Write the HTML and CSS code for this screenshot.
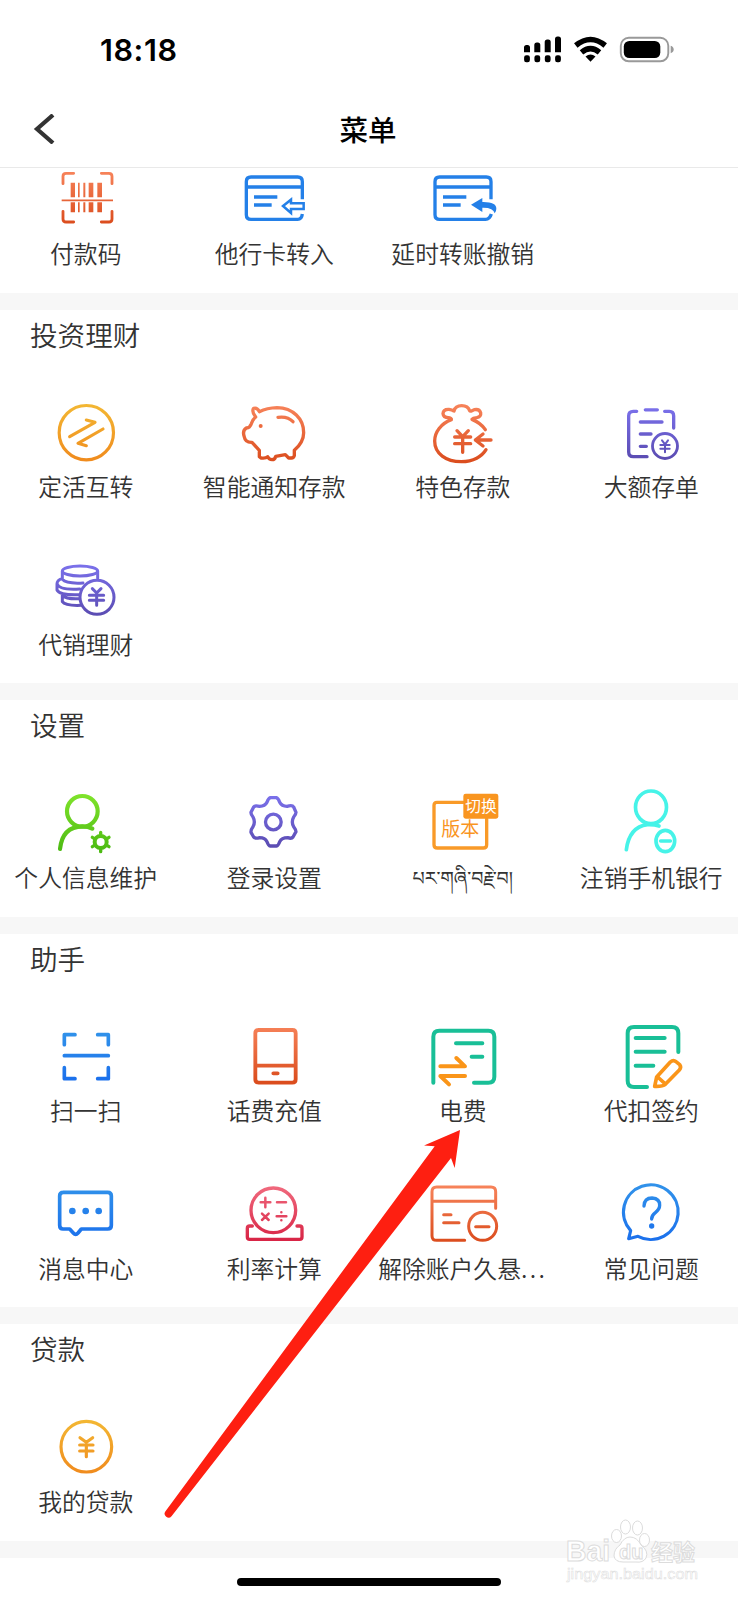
FILE: index.html
```html
<!DOCTYPE html>
<html lang="zh-CN">
<head>
<meta charset="utf-8">
<title>菜单</title>
<link rel="stylesheet" href="styles.css">
</head>
<body>
<svg class="defs" width="0" height="0" aria-hidden="true">
  <defs>
    <linearGradient id="orange"><stop offset="0" stop-color="#f7835a"/><stop offset="1" stop-color="#db4d1e"/></linearGradient>
    <linearGradient id="blue"><stop offset="0" stop-color="#3091ea"/><stop offset="1" stop-color="#1b70ec"/></linearGradient>
    <linearGradient id="purple"><stop offset="0" stop-color="#7a70ea"/><stop offset="1" stop-color="#5b4cb2"/></linearGradient>
    <linearGradient id="amber"><stop offset="0" stop-color="#f3b733"/><stop offset="1" stop-color="#f08b1d"/></linearGradient>
    <linearGradient id="oA" href="#orange" gradientUnits="userSpaceOnUse" x1="0" x2="0" y1="35" y2="190"/>
    <linearGradient id="oB" href="#orange" gradientUnits="userSpaceOnUse" x1="0" x2="0" y1="42" y2="215"/>
    <linearGradient id="oE" href="#orange" gradientUnits="userSpaceOnUse" x1="0" x2="0" y1="530" y2="695"/>
    <linearGradient id="bD" href="#blue" gradientUnits="userSpaceOnUse" x1="0" x2="0" y1="70" y2="210"/>
    <linearGradient id="bE" href="#blue" gradientUnits="userSpaceOnUse" x1="0" x2="0" y1="530" y2="695"/>
    <linearGradient id="pB" href="#purple" gradientUnits="userSpaceOnUse" x1="0" x2="0" y1="55" y2="205"/>
    <linearGradient id="pC" href="#purple" gradientUnits="userSpaceOnUse" x1="0" x2="0" y1="528" y2="678"/>
    <linearGradient id="pS" href="#purple" gradientUnits="userSpaceOnUse" x1="0" x2="0" y1="350" y2="502"/>
    <linearGradient id="aB" href="#amber" gradientUnits="userSpaceOnUse" x1="0" x2="0" y1="42" y2="212"/>
    <linearGradient id="aL" href="#amber" gradientUnits="userSpaceOnUse" x1="0" x2="0" y1="362" y2="522"/>
    <linearGradient id="gS" gradientUnits="userSpaceOnUse" x1="0" x2="0" y1="345" y2="515"><stop offset="0" stop-color="#7fe32b"/><stop offset="1" stop-color="#4cba12"/></linearGradient>
    <linearGradient id="rE" gradientUnits="userSpaceOnUse" x1="0" x2="0" y1="532" y2="692"><stop offset="0" stop-color="#f0697d"/><stop offset="1" stop-color="#d82546"/></linearGradient>
  </defs>
</svg>

<header class="top">
  <div class="status">
    <span class="clock">18:18</span>
    <svg class="indicators" width="152" height="28" viewBox="523 36 152 28">
      <path d="M524 47.500q0-2.500 2.500-2.500h1q2.500 0 2.500 2.500v4.700h-6zM534.300 45q0-2.500 2.500-2.500h1q2.500 0 2.500 2.500v7.200h-6zM544.700 42q0-2.500 2.500-2.500h1q2.500 0 2.500 2.500v10.200h-6zM555 39q0-2.500 2.500-2.500h1q2.500 0 2.500 2.500v13.200h-6z" fill="#000"/>
      <path d="M526.300 57.500h1.400v2.600h-1.400zM536.600 57.500h1.400v2.600h-1.400zM547 57.500h1.400v2.600h-1.400zM557.300 57.500h1.400v2.600h-1.400z" fill="#000" stroke="#000" stroke-width="4.400" stroke-linejoin="round"/>
      <path d="M575.800 45.500Q590.500 33.500 605.200 45.500M581.500 52.300Q590.500 45 599.500 52.300" fill="none" stroke="#000" stroke-width="5.500"/>
      <path d="M585.500 56.500Q590.500 52.300 595.500 56.500L590.500 61.800Z" fill="#000"/>
      <rect x="620.800" y="37.800" width="47.500" height="23.500" rx="8" fill="none" stroke="#999" stroke-width="1.900"/>
      <rect x="623.800" y="41" width="36.500" height="17" rx="5.500" fill="#000"/>
      <path d="M670.700 45.800q3 1 3 3.700t-3 3.700z" fill="#999"/>
    </svg>
  </div>
  <nav class="nav">
    <svg class="back" width="22" height="30" viewBox="0 0 22 30"><path d="M20 1L4 15L20 29" fill="none" stroke="#333" stroke-width="4.200"/></svg>
    <h1 class="title">菜单</h1>
  </nav>
</header>

<main>
  <section class="section section-scrolled">
    <div class="grid">
      <a class="item">
        <svg class="icon" viewBox="137 -5 240 240" stroke="url(#oA)" stroke-width="8.500"><path d="M188 72V50q0-9 9-9h23M303 41h23q9 0 9 9v22M188 155v23q0 9 9 9h23M303 187h23q9 0 9-9v-23"/><path d="M211 69h13v44h-13zM233 69h5v44h-5zM249 69h6v44h-6zM265 69h14v44h-14zM291 69h14v44h-14zM211 128h13v30h-13zM233 128h5v30h-5zM249 128h6v30h-6zM265 128h14v30h-14zM291 128h14v30h-14zM184 119.500h154v5H184z" fill="url(#oA)" stroke="none"/></svg>
        <span class="label">付款码</span>
      </a>
      <a class="item">
        <svg class="icon butt" viewBox="703 -5 240 240" stroke="#2480e8" stroke-width="10"><path d="M908 119V66q0-14-14-14H754q-14 0-14 14v99q0 14 14 14h140q12 0 14-16M740 82h168M763 112h70M763 136h53"/><path d="M850 139l24-19v11h38v17h-38v12z" stroke-width="7.500"/></svg>
        <span class="label">他行卡转入</span>
      </a>
      <a class="item">
        <svg class="icon butt" viewBox="161 -5 240 240" stroke="#2480e8" stroke-width="10"><path d="M365 119V66q0-14-14-14H211q-14 0-14 14v99q0 14 14 14h138q12 0 17-16M197 82h168M221 112h70M221 136h53"/><path d="M305 135l34-20v12q42-1 42 20 0 8-5 14-4-18-37-17v13z" fill="#2480e8" stroke="none"/></svg>
        <span class="label">延时转账撤销</span>
      </a>
    </div>
  </section>

  <section class="section">
    <h2 class="heading">投资理财</h2>
    <div class="grid">
      <a class="item">
        <svg class="icon" viewBox="137 5 240 240" stroke="url(#aB)" stroke-width="9.500"><circle cx="258" cy="127" r="81.500"/><path d="M208 139L284 96L258 89M308 116L233 159L258 166"/></svg>
        <span class="label">定活互转</span>
      </a>
      <a class="item">
        <svg class="icon" viewBox="703 5 240 240" stroke="url(#oB)" stroke-width="10"><path d="M779 64Q802 53 832 52C880 53 912 85 912 127C912 150 902 164 884 180V196Q882 204 873 203H867L857 193L828 198Q826 208 817 208Q808 208 804 199Q798 205 784 203L779 199V180L757 156Q737 157 734 140Q727 121 740 113Q751 112 755 100Q758 88 768 80Q755 63 762 54Q773 51 779 64Z"/><path d="M835 81Q864 77 880 94"/><circle cx="783" cy="107" r="6" fill="#ed6b3e" stroke="none"/></svg>
        <span class="label">智能通知存款</span>
      </a>
      <a class="item">
        <svg class="icon" viewBox="161 5 240 240" stroke="url(#oB)" stroke-width="10"><path d="M348 118Q335 98 308 87Q311 83 322 82Q336 80 334 67Q330 55 315 58Q303 65 301 61Q296 46 277 46Q258 46 254 62Q248 58 239 57Q222 56 221 70Q222 82 238 82Q248 84 246 88C215 100 196 125 196 152C196 190 230 214 276 214C312 214 338 198 350 178M263 121l17 18 17-18M280 140v46M256 140h48M256 160h48M318 149h47M341 131L318 149L341 167"/></svg>
        <span class="label">特色存款</span>
      </a>
      <a class="item">
        <svg class="icon" viewBox="727 5 240 240" stroke="url(#pB)" stroke-width="10"><path d="M804 63h-10q-14 0-14 14v108q0 14 14 14h41M830 58.500h36M888 63h14q13 0 13 14v36M815 95h65M815 131h32M815 168h18"/><circle cx="889" cy="167" r="37.500" stroke-width="8.500"/><path d="M880 150l9 12 9-12M889 162v24M875 164h28M875 175h28" stroke-width="6"/></svg>
        <span class="label">大额存单</span>
      </a>
      <a class="item">
        <svg class="icon" viewBox="137 478 240 240" stroke="url(#pC)" stroke-width="9"><ellipse cx="239" cy="544" rx="53" ry="15"/><path d="M186 545v24q12 14 62 11M292 545v21M186 566q-16 6-16 16 6 20 68 16M170 582v19q8 16 66 14M186 613v23q9 13 56 11M186 617q12 12 52 10"/><circle cx="290" cy="623" r="51" fill="#fff"/><path d="M276 597l13 13 13-13M289 610v37M267 617h43M267 632h43"/></svg>
        <span class="label">代销理财</span>
      </a>
    </div>
  </section>

  <section class="section">
    <h2 class="heading">设置</h2>
    <div class="grid">
      <a class="item">
        <svg class="icon" viewBox="137 307 240 240" stroke="url(#gS)" stroke-width="12.500"><circle cx="246" cy="395" r="46"/><path d="M179 508Q186 441 246 440Q264 440 276 447"/><circle cx="301" cy="487" r="18" stroke-width="12"/><path d="M301 458v6M301 510v6M276 473l5 3M321 498l5 3M276 501l5-3M321 476l5-3" stroke-width="10"/></svg>
        <span class="label">个人信息维护</span>
      </a>
      <a class="item">
        <svg class="icon" viewBox="703 307 240 240" stroke="url(#pS)" stroke-width="10"><path d="M812 354H830Q836 356 840 368Q846 380 862 380Q878 375 882 382L889 398Q889 404 882 412Q874 427 882 441Q889 450 889 456L880 472Q876 478 864 474Q846 474 840 486Q836 498 830 499H812Q806 498 802 486Q796 474 780 474Q766 478 762 472L754 458Q753 450 760 441Q768 427 760 412Q753 404 754 398L762 382Q766 376 780 380Q796 380 802 368Q806 356 812 354Z"/><circle cx="821" cy="427" r="23.500"/></svg>
        <span class="label">登录设置</span>
      </a>
      <a class="item">
        <svg class="icon" viewBox="161 37 240 240" stroke="#f99a28" stroke-width="10"><path d="M282 98H203q-9 0-9 9v118q0 10 10 10h138q10 0 10-10V147"/><rect x="282" y="72" width="105" height="75" rx="7" fill="#f9951f" stroke="none"/><text class="badge-text" x="335" y="127">切换</text><text class="version-text" x="273" y="199">版本</text></svg>
        <span class="label tibetan" lang="bo">པར་གཞི་བརྗེ་བ།</span>
      </a>
      <a class="item">
        <svg class="icon" viewBox="727 37 240 240" stroke="#46f3e8" stroke-width="11"><ellipse cx="847" cy="113" rx="46.500" ry="49"/><path d="M773 240Q782 172 836 165Q856 164 871 169"/><ellipse cx="890" cy="214" rx="28" ry="32"/><path d="M876 214h29"/></svg>
        <span class="label">注销手机银行</span>
      </a>
    </div>
  </section>

  <section class="section">
    <h2 class="heading">助手</h2>
    <div class="grid">
      <a class="item">
        <svg class="icon" viewBox="137 18 240 240" stroke="url(#bD)" stroke-width="11"><path d="M192 104V74h32M292 74h32v30M192 173v33h32M292 206h32v-33M192 137h132"/></svg>
        <span class="label">扫一扫</span>
      </a>
      <a class="item">
        <svg class="icon" viewBox="703 18 240 240" stroke="url(#oB)" stroke-width="11.500"><path d="M777 60h101q10 0 10 10v138q0 10-10 10H777q-10 0-10-10V70q0-10 10-10ZM768 167h120M821 190h13"/></svg>
        <span class="label">话费充值</span>
      </a>
      <a class="item">
        <svg class="icon" viewBox="161 18 240 240" stroke="#19bf97" stroke-width="12"><path d="M192 218V80q0-18 18-18h147q18 0 18 18v120q0 18-18 18h-43M260 100h79M307 140h32"/><path d="M213 169h74l-26-25M287 198H213l26 25" stroke="#fa9519"/></svg>
        <span class="label">电费</span>
      </a>
      <a class="item">
        <svg class="icon" viewBox="727 18 240 240" stroke="#19bf97" stroke-width="12"><path d="M929 126V70q0-19-19-19H796q-19 0-19 19v142q0 19 19 19h39M801 84h87M801 125h87M801 167h53"/><path d="M858 229L864 201L905 156Q914 148 922 155L933 164Q939 172 932 180L890 223Q882 230 858 229ZM867 201L888 220" stroke="#fa9519" stroke-width="11"/></svg>
        <span class="label">代扣签约</span>
      </a>
      <a class="item">
        <svg class="icon" viewBox="137 491 240 240" stroke="url(#bE)" stroke-width="11"><path d="M188 549h134q11 0 11 11v88q0 11-11 11h-79l-10 12q-7 8-14 0l-11-12h-20q-10 0-10-11v-88q0-11 11-11z"/><path d="M216 605h.1M256 605h.1M295 605h.1" stroke-width="20"/></svg>
        <span class="label">消息中心</span>
      </a>
      <a class="item">
        <svg class="icon" viewBox="703 491 240 240" stroke="url(#rE)" stroke-width="10"><circle cx="821" cy="603" r="67"/><path d="M758 650h-8q-7 0-7 7v26q0 7 7 7h150q7 0 7-7v-26q0-7-7-7h-8"/><path d="M797 565v29M783 579h29M832 579h27M787 613l20 19M807 613l-20 19M831 621h29M845 609h.1M845 633h.1" stroke-width="7.500"/></svg>
        <span class="label">利率计算</span>
      </a>
      <a class="item">
        <svg class="icon" viewBox="161 491 240 240" stroke="url(#oE)" stroke-width="9"><path d="M379 597V547q0-14-14-14H202q-14 0-14 14v132q0 14 14 14h84M188 576h190M223 616h22M223 640h46"/><circle cx="340" cy="651" r="42"/><path d="M319 652h40"/></svg>
        <span class="label">解除账户久悬<span class="dots">...</span></span>
      </a>
      <a class="item">
        <svg class="icon" viewBox="727 491 240 240" stroke="url(#bE)" stroke-width="9.500"><path d="M780 688L786 664A82 82 0 1 1 808 681Z"/><path d="M826 590Q827 566 850 566Q874 568 873 588Q873 600 860 610Q849 618 849 629" stroke-width="10"/><circle cx="849" cy="650" r="8" fill="#2078eb" stroke="none"/></svg>
        <span class="label">常见问题</span>
      </a>
    </div>
  </section>

  <section class="section">
    <h2 class="heading">贷款</h2>
    <div class="grid">
      <a class="item">
        <svg class="icon" viewBox="137 320 240 240" stroke="url(#aL)" stroke-width="9.500"><circle cx="258" cy="442" r="76"/><path d="M239 415l19 14 19-14M258 429v43M238 437h40M238 455h40"/></svg>
        <span class="label">我的贷款</span>
      </a>
    </div>
  </section>
</main>

<div class="home-indicator"></div>

<svg class="pointer" width="300" height="392" viewBox="163 1128 300 392"><path d="M460 1130L424 1145.500L434.700 1146.200L165.300 1511.500A3.900 3.900 0 0 0 171.500 1516.200L451 1158L454.700 1168Z" fill="#fe1f11"/></svg>

<svg class="watermark" width="140" height="72" viewBox="560 1515 140 72">
  <g class="mark-outline">
    <text x="566" y="1561" class="mark-name" textLength="44" lengthAdjust="spacingAndGlyphs">Bai</text>
    <ellipse cx="616.500" cy="1536" rx="5" ry="6.500"/><ellipse cx="625.500" cy="1527" rx="5" ry="7"/><ellipse cx="637.500" cy="1528" rx="5" ry="7"/><ellipse cx="644.500" cy="1540" rx="5" ry="6.500"/>
    <path d="M630 1537Q637 1537 641 1545Q649 1551 646 1558Q643 1563 636 1562H623Q615 1562 614 1556Q614 1549 620 1545Q624 1537 630 1537Z"/>
    <text x="619" y="1559" class="mark-du">du</text>
    <text x="651" y="1559.500" class="mark-cn">经验</text>
    <text x="567" y="1579" class="mark-url" textLength="131" lengthAdjust="spacingAndGlyphs">jingyan.baidu.com</text>
  </g>
</svg>
</body>
</html>
```
FILE: styles.css
```css
* {
  box-sizing: border-box;
}

body {
  position: relative;
  width: 738px;
  height: 1600px;
  margin: 0;
  overflow: hidden;
  background: #fff;
  color: #333;
  font-family: "Noto Sans CJK SC", "Noto Sans", sans-serif;
}

.defs {
  position: absolute;
}

.top {
  position: relative;
  z-index: 1;
  height: 168px;
  border-bottom: 1.5px solid #e9e9e9;
  background: #fff;
}

.status {
  display: flex;
  align-items: center;
  justify-content: space-between;
  height: 100px;
  padding: 0 63px 0 100px;
}

.clock {
  color: #000;
  font: 600 30.500px/1 Inter, sans-serif;
  letter-spacing: .6px;
}

.nav {
  display: flex;
  align-items: center;
  height: 59px;
  padding: 0 34px;
}

.title {
  flex: 1;
  margin: 0 23px 2px 0;
  color: #000;
  font-size: 28.500px;
  font-weight: 500;
  line-height: 40px;
  text-align: center;
}

.back {
  margin: 0 0 1px -1px;
}

.section {
  border-bottom: 17.1px solid #f7f7f7;
}

.section-scrolled {
  margin-top: -32.900px;
}

.heading {
  margin: 0;
  padding: 0 0 9.800px 30px;
  font-size: 27.600px;
  font-weight: 350;
  line-height: 48.800px;
}

.grid {
  display: grid;
  grid-template-columns: repeat(4, 188.500px);
  grid-auto-rows: 157.600px;
  margin: 0 -7.500px 0 -8.500px;
}

.item {
  display: flex;
  flex-direction: column;
  align-items: center;
  justify-content: flex-end;
  padding-bottom: 24.900px;
}

.icon {
  width: 80px;
  height: 80px;
  flex: none;
  margin: 0 .5px -.6px 0;
  fill: none;
  stroke-linecap: round;
  stroke-linejoin: round;
}

.butt {
  stroke-linecap: butt;
  stroke-linejoin: miter;
}

.label {
  font-size: 23.800px;
  font-weight: 350;
  line-height: 30px;
  white-space: nowrap;
}

.dots {
  letter-spacing: 2.400px;
}

.tibetan {
  height: 30px;
  padding-top: 7px;
  font-family: "Noto Sans Tibetan", "Noto Serif Tibetan", "Noto Sans CJK SC", sans-serif;
  font-size: 19px;
  font-weight: 400;
}

.badge-text,
.version-text {
  stroke: none;
  text-anchor: middle;
}

.badge-text {
  fill: #fff;
  font-size: 47px;
}

.version-text {
  fill: #f9951f;
  font-size: 57px;
}

.home-indicator {
  width: 264px;
  height: 8px;
  margin: 20px auto 0;
  border-radius: 4px;
  background: #000;
}

.pointer {
  position: absolute;
  top: 1128px;
  left: 163px;
}

.watermark {
  position: absolute;
  top: 1515px;
  left: 560px;
}

.mark-outline {
  fill: #fff;
  stroke: #dcdcdc;
  stroke-width: 1;
}

.mark-name {
  font: 700 29px "Liberation Sans", sans-serif;
}

.mark-du {
  font: 700 20px "Liberation Sans", sans-serif;
}

.mark-cn {
  font-size: 22px;
  font-weight: 700;
}

.mark-url {
  font: 400 15px "Liberation Sans", sans-serif;
  stroke-width: .5;
}
```
